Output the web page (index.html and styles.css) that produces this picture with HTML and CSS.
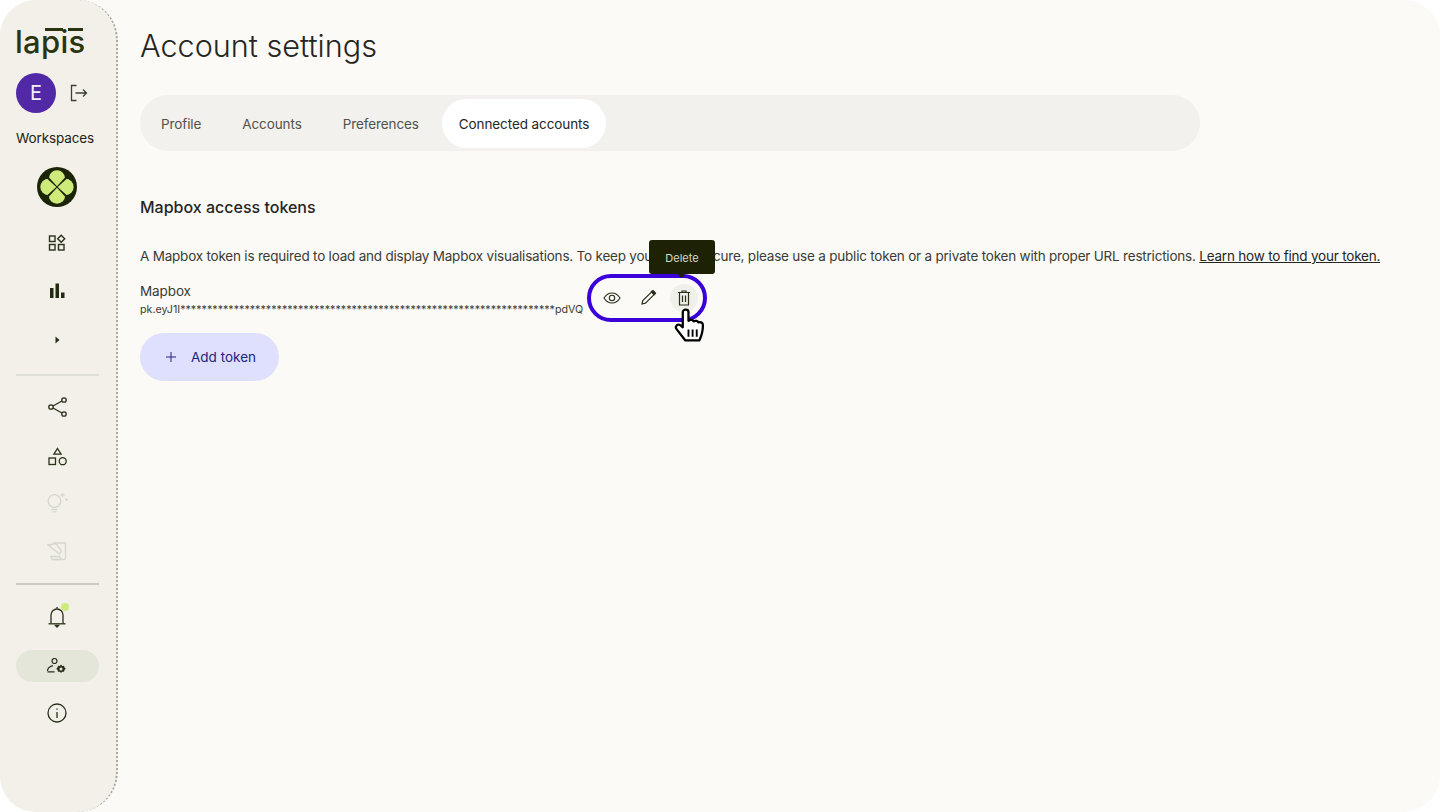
FILE: index.html
```html
<!DOCTYPE html>
<html lang="en">
<head>
<meta charset="utf-8">
<title>Account settings</title>
<link rel="stylesheet" href="styles.css">
</head>
<body>
<div class="app">
  <aside class="sidebar">
    <div class="logo">lapis</div>
    <div class="user">
      <div class="avatar">E</div>
      <svg class="ico" width="20" height="20" viewBox="0 0 20 20" fill="none" stroke="#3c4030" stroke-width="1.3"><path d="M7.5 2.5H2.5v15h5"/><path d="M6.5 10h11M14 6.5l3.5 3.5-3.5 3.5"/></svg>
    </div>
    <div class="ws-label">Workspaces</div>
    <svg class="ws-logo" width="40" height="40" viewBox="0 0 40 40"><circle cx="20" cy="20" r="20" fill="#1c2408"/><g fill="#cdea7a"><circle cx="20" cy="11.500" r="8.200"/><circle cx="20" cy="28.500" r="8.200"/><circle cx="11.500" cy="20" r="8.200"/><circle cx="28.500" cy="20" r="8.200"/></g><path d="M20 19.300L12 10.500 10.500 12 19.300 20 10.500 28 12 29.500 20 20.700 28 29.500 29.500 28 20.700 20 29.500 12 28 10.500z" fill="#1c2408"/></svg>

    <div class="nav-item item-a"><svg width="20" height="20" viewBox="0 0 20 20" fill="none" stroke="#2a2f1c" stroke-width="1.4"><rect x="2.500" y="3" width="5.500" height="5.500"/><rect x="2.500" y="11.500" width="5.500" height="5.500"/><rect x="11.500" y="11.500" width="5.500" height="5.500"/><path d="M14.200 2.200l3.500 3.500-3.500 3.500-3.500-3.500z"/></svg></div>
    <div class="nav-item item-b"><svg width="18" height="18" viewBox="0 0 18 18" fill="#222a10"><rect x="2" y="6" width="3.500" height="10"/><rect x="7.500" y="1.500" width="3.500" height="14.500"/><rect x="13" y="10.500" width="3.500" height="5.500"/></svg></div>
    <div class="nav-item item-c"><svg width="8" height="10" viewBox="0 0 8 10" fill="#2a2f1c"><path d="M2.500 1.500l4 3.500-4 3.500z"/></svg></div>
    <hr class="divider first">
    <div class="nav-item item-d"><svg width="22" height="22" viewBox="0 0 22 22" fill="none" stroke="#2a2f1c" stroke-width="1.300"><circle cx="18" cy="4" r="2.200"/><circle cx="5" cy="11" r="2.200"/><circle cx="18" cy="18" r="2.200"/><path d="M7 10l9-5M7 12l9 5"/></svg></div>
    <div class="nav-item item-e"><svg width="22" height="22" viewBox="0 0 22 22" fill="none" stroke="#2a2f1c" stroke-width="1.300"><path d="M11.500 2.500l3.600 5.700H7.900z"/><rect x="3" y="12" width="6.500" height="6.500"/><circle cx="16.700" cy="15.200" r="3.500"/></svg></div>
    <div class="nav-item item-f"><svg width="24" height="24" viewBox="0 0 24 24" fill="none" stroke="#d6d6ce" stroke-width="1.300"><circle cx="9.500" cy="10" r="6.300"/><path d="M6.500 18.500h6M7.500 20.800h4"/><path d="M17.500 2v4M15.500 4h4M21.500 7.500v2.500M20.200 8.700h2.600"/></svg></div>
    <div class="nav-item item-g"><svg width="22" height="22" viewBox="0 0 22 22" fill="none" stroke="#d6d6ce" stroke-width="1.300"><path d="M7 3h12.500v15a1.500 1.500 0 0 1-1.500 1.500H7.500"/><path d="M2 5l8-1.500 5.500 7.500-2 3z"/><path d="M5 16.500h9v3H6z"/></svg></div>
    <hr class="divider second">
    <div class="nav-item item-h bell"><svg width="20" height="24" viewBox="0 0 20 24" fill="none" stroke="#2a2f1c" stroke-width="1.300"><path d="M4 18.500V10a6 6 0 0 1 12 0v8.500"/><path d="M1.500 18.800h17"/><path d="M10 2v1.500"/><path d="M8.500 20.500h3l-1.500 1.500z" fill="#2a2f1c"/></svg><span class="dot"></span></div>
    <div class="nav-pill"><svg width="20" height="16" viewBox="0 0 20 16" fill="none" stroke="#2a2f1c" stroke-width="1.200"><circle cx="7.500" cy="3" r="2.500"/><path d="M0.500 13c0-2.500 2.500-4.500 5.500-5.300M0.500 13.800h7"/><path d="M14 6.500l1.200 1.400 1.800-.1.500 1.800 1.300 1.200-1.300 1.200-.5 1.800-1.800-.1-1.200 1.400-1.200-1.400-1.800.1-.5-1.800-1.300-1.200 1.300-1.200.5-1.800 1.800.1z" fill="#2a2f1c" stroke="none"/><circle cx="14" cy="11" r="1.500" fill="#e5e6da" stroke="none"/></svg></div>
    <div class="nav-item item-i"><svg width="22" height="22" viewBox="0 0 22 22" fill="none" stroke="#2a2f1c" stroke-width="1.300"><circle cx="11" cy="11" r="9"/><path d="M11 10v6"/><path d="M11 6.500v1.200"/></svg></div>
  </aside>

  <main class="main">
    <h1 class="title">Account settings</h1>
    <nav class="tabs">
      <a class="tab">Profile</a>
      <a class="tab">Accounts</a>
      <a class="tab">Preferences</a>
      <a class="tab active">Connected accounts</a>
    </nav>
    <h2 class="heading">Mapbox access tokens</h2>
    <p class="desc">A Mapbox token is required to load and display Mapbox visualisations. To keep your token secure, please use a public token or a private token with proper URL restrictions. <a class="link">Learn how to find your token.</a></p>
    <div class="token-row">
      <div class="token-info">
        <div class="token-name">Mapbox</div>
        <div class="token-value">pk.eyJ1I**********************************************************************pdVQ</div>
      </div>
      <div class="actions">
        <button class="act"><svg width="18" height="18" viewBox="0 0 18 18" fill="none" stroke="#2a2f1c" stroke-width="1.100"><path d="M1 9c2-3.300 4.800-5 8-5s6 1.700 8 5c-2 3.300-4.800 5-8 5s-6-1.700-8-5z"/><circle cx="9" cy="9" r="2.700"/></svg></button>
        <button class="act"><svg width="18" height="18" viewBox="0 0 18 18" fill="none" stroke="#2a2f1c" stroke-width="1.200"><path d="M3 15l.8-3.500L12.500 3l2.600 2.600-8.700 8.600z"/><path d="M12.500 2.500l1.500-1 2.500 2.500-1 1.500z" fill="#2a2f1c"/></svg></button>
        <button class="act hover"><svg width="16" height="18" viewBox="0 0 16 18" fill="none" stroke="#2a2f1c" stroke-width="1.200"><path d="M2 3.500h12M6 3.500V2h4v1.500"/><path d="M3.500 3.500v12.500h9V3.500"/><path d="M6.500 6.500v6.500M9.500 6.500v6.500"/></svg></button>
        <div class="ring"></div>
        <div class="tooltip">Delete</div>
        <svg class="cursor" width="31" height="36" viewBox="0 0 30 34"><path d="M8.500 3.500c0-3 5.500-3 5.500 0V12c1.500-1.500 4.500-1 5 .5 1.500-1 4-.5 4.500 1 1.500-.8 4.500 0 4.500 2.500 0 5-1 10-3.500 15H11L2.500 20c-2-2.500 1-5.500 3.500-3.800l2.500 2z" fill="#fff" stroke="#000" stroke-width="2.200" stroke-linejoin="round"/><path d="M14 20.500v7M18 20.500v7M22 20.500v7" stroke="#000" stroke-width="1.800"/></svg>
      </div>
    </div>
    <button class="add"><svg class="plus" width="10" height="10" viewBox="0 0 10 10" fill="none" stroke="#23237f" stroke-width="1"><path d="M5 0v10M0 5h10"/></svg>Add token</button>
  </main>
</div>
</body>
</html>
```

FILE: styles.css
```css
* { box-sizing: border-box; }
html, body { margin: 0; height: 100%; background: #fff; overflow: hidden; }
body { font-family: "Inter", "Liberation Sans", sans-serif; color: #24261f; }

.app {
  display: flex;
  width: 1440px;
  height: 812px;
  background: #fbfaf6;
  border-radius: 36px;
  overflow: hidden;
}

.sidebar {
  width: 118px;
  flex: none;
  display: flex;
  flex-direction: column;
  align-items: center;
  background: #f2f0e8;
  border-right: 2px dotted #a9a9a2;
  border-radius: 0 40px 40px 0;
  padding: 20px 18px 0 16px;
}

.logo {
  position: relative;
  align-self: flex-start;
  margin-left: -1px;
  font-size: 31px;
  font-weight: 500;
  line-height: 44px;
  letter-spacing: 0.3px;
  color: #2a3510;
  height: 44px;
}
.logo::before,
.logo::after {
  content: "";
  position: absolute;
  top: 8px;
  height: 3px;
  background: #2a3510;
}
.logo::before { left: 30px; width: 18px; }
.logo::after { left: 53px; width: 15px; }

.user {
  align-self: flex-start;
  display: flex;
  align-items: center;
  gap: 13px;
  margin-top: 9px;
}
.avatar {
  width: 40px;
  height: 40px;
  border-radius: 50%;
  background: #5128a6;
  color: #f3f0fa;
  font-size: 20px;
  display: flex;
  align-items: center;
  justify-content: center;
}

.ws-label {
  align-self: flex-start;
  margin-top: 16px;
  font-size: 13.5px;
  letter-spacing: -0.12px;
  line-height: 18px;
  color: #1e2213;
  white-space: nowrap;
}
.ws-logo { margin-top: 20px; flex: none; }

.nav-item {
  position: relative;
  flex: none;
  height: 28px;
  display: flex;
  align-items: center;
  justify-content: center;
}
.item-a { margin-top: 22px; }
.item-b { margin-top: 20px; }
.item-c { margin-top: 21px; }
.item-d { margin-top: 17px; }
.item-e { margin-top: 22px; }
.item-f { margin-top: 18px; }
.item-g { margin-top: 20px; }
.item-h { margin-top: 18px; }
.item-i { margin-top: 17px; }

.divider {
  width: 83px;
  height: 2px;
  border: 0;
  margin: 0;
  flex: none;
  background: #e0dfd7;
}
.divider.first { margin-top: 20px; }
.divider.second { margin-top: 18px; background: #c9c9c0; }

.nav-pill {
  width: 83px;
  height: 32px;
  flex: none;
  margin-top: 19px;
  border-radius: 16px;
  background: #e5e6da;
  display: flex;
  align-items: center;
  justify-content: center;
}
.dot {
  position: absolute;
  top: 0;
  left: 50%;
  margin-left: 4px;
  width: 8px;
  height: 8px;
  border-radius: 50%;
  background: #cdea7a;
}

.main {
  flex: 1;
  min-width: 0;
  padding: 25px 0 0 22px;
}
.title {
  margin: 0;
  font-size: 30.6px;
  line-height: 42px;
  font-weight: 300;
  color: #24261f;
}
.tabs {
  display: flex;
  align-items: center;
  width: 1060px;
  height: 56px;
  margin-top: 28px;
  padding: 0 4px;
  border-radius: 28px;
  background: #f2f1ed;
}
.tab {
  font-size: 13.5px;
  letter-spacing: -0.1px;
  line-height: 51px;
  height: 49px;
  padding: 0 17px;
  border-radius: 25px;
  color: #50524a;
  margin-right: 7px;
}
.tab.active { background: #fff; color: #24261f; margin: 0 0 0 -1px; }

.heading {
  margin: 46px 0 0;
  font-size: 16px;
  line-height: 20px;
  font-weight: 500;
  color: #24261f;
}
.desc {
  margin: 29px 0 0;
  font-size: 13.5px;
  letter-spacing: -0.21px;
  line-height: 20px;
  color: #3a3c35;
  white-space: nowrap;
}
.link { color: #24261f; text-decoration: underline; }

.token-row {
  display: flex;
  align-items: center;
  gap: 13px;
  margin-top: 8px;
  height: 48px;
}
.token-info { width: 445px; margin-top: 5px; }
.token-name { font-size: 13.5px; letter-spacing: -0.1px; line-height: 18px; color: #3a3c35; }
.token-value { font-size: 10.7px; line-height: 19px; color: #3a3c35; white-space: nowrap; }

.actions {
  position: relative;
  display: flex;
  gap: 8px;
}
.act {
  width: 28px;
  height: 28px;
  padding: 0;
  border: 0;
  border-radius: 50%;
  background: transparent;
  display: flex;
  align-items: center;
  justify-content: center;
}
.act.hover { background: #f0f0ea; }

.ring {
  position: absolute;
  left: -11px;
  top: -10px;
  width: 120px;
  height: 48px;
  border: 4px solid #3b00d9;
  border-radius: 24px;
}
.tooltip {
  position: absolute;
  left: 51px;
  top: -44px;
  width: 66px;
  height: 34px;
  border-radius: 3px;
  background: #1d2204;
  color: #d9d9c8;
  font-size: 11px;
  line-height: 36px;
  text-align: center;
}
.tooltip::after {
  content: "";
  position: absolute;
  left: 30px;
  bottom: -3px;
  width: 5px;
  height: 5px;
  background: #1d2204;
  transform: rotate(45deg);
}
.cursor {
  position: absolute;
  left: 76px;
  top: 24px;
}

.add {
  display: flex;
  align-items: center;
  width: 139px;
  height: 48px;
  margin-top: 11px;
  padding: 0 0 0 26px;
  border: 0;
  border-radius: 24px;
  background: #dfe0fd;
  color: #23237f;
  font: 13.5px "Inter", "Liberation Sans", sans-serif;
}
.plus { margin-right: 15px; }
```
